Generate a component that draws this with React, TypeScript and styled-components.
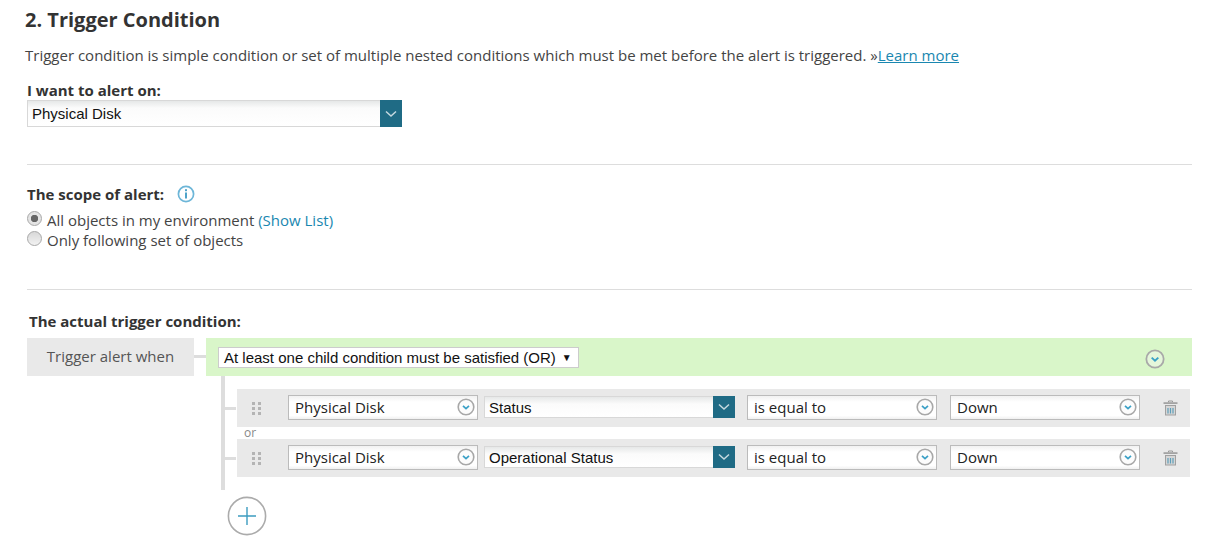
import React from "react";
import styled, { createGlobalStyle } from "styled-components";

const Global = createGlobalStyle`
  html, body { margin: 0; padding: 0; background: #fff; }
  body { font-family: "Open Sans", "Liberation Sans", sans-serif; color: #3c3c3c; overflow: hidden; }
`;

const Page = styled.div`
  width: 1206px;
  height: 559px;
  box-sizing: border-box;
  padding: 8px 14px 0 25px;
`;
const Title = styled.h2`
  margin: 0;
  font-size: 20px;
  line-height: 24px;
  font-weight: 700;
  color: #333;
`;
const Description = styled.p`
  margin: 11px 0 0;
  font-size: 15px;
  line-height: 24px;
  color: #444;
`;
const Link = styled.a<{ $under?: boolean }>`
  color: #1a87b0;
  text-decoration: ${(p) => (p.$under ? "underline" : "none")};
`;
const Section = styled.section<{ $pad?: number; $top?: number }>`
  padding-left: ${(p) => p.$pad ?? 2}px;
  margin-top: ${(p) => p.$top ?? 0}px;
`;
const Label = styled.div`
  font-size: 15px;
  line-height: 18px;
  font-weight: 700;
  color: #333;
`;
const Rule = styled.hr<{ $top: number }>`
  border: 0;
  height: 1px;
  background: #ddd;
  margin: ${(p) => p.$top}px 0 0 2px;
`;
const MainSelect = styled.div`
  display: flex;
  width: 375px;
  height: 27px;
  box-sizing: border-box;
  margin-top: 1px;
`;
const NativeField = styled.div`
  flex: 1;
  box-sizing: border-box;
  display: flex;
  align-items: center;
  padding-left: 4px;
  font-family: "Liberation Sans", Arial, sans-serif;
  font-size: 15px;
  color: #111;
  background: linear-gradient(#e6e8e8 0, #fbfbfb 7px, #fff 100%);
  border: 1px solid #d8d8d8;
  border-right: 0;
`;
const ArrowBox = styled.div`
  width: 22px;
  background: #1f6b85;
  display: flex;
  align-items: center;
  justify-content: center;
`;
const ScopeTitle = styled.div`
  display: flex;
  align-items: center;
  gap: 13px;
`;
const RadioList = styled.div`
  margin-top: 7px;
`;
const RadioRow = styled.div`
  display: flex;
  align-items: center;
  height: 20px;
  font-size: 15px;
  color: #444;
`;
const Radio = styled.span<{ $on?: boolean }>`
  width: 15px;
  height: 15px;
  margin: -4px 5px 0 0;
  border-radius: 50%;
  box-sizing: border-box;
  border: 1px solid #a8a8a8;
  background: ${(p) =>
    p.$on
      ? "radial-gradient(circle, #666 0 3.4px, #e4e4e4 4px)"
      : "linear-gradient(#d8d8d8, #f2f2f2)"};
`;
const Builder = styled.div`
  display: flex;
  margin: 8px 0 0 2px;
`;
const WhenBox = styled.div`
  width: 167px;
  height: 38px;
  box-sizing: border-box;
  padding-bottom: 2px;
  background: #e9e9e9;
  display: flex;
  align-items: center;
  justify-content: center;
  font-size: 15px;
  color: #555;
`;
const Stub = styled.div`
  width: 12px;
  height: 3px;
  margin-top: 17px;
  background: #ddd;
`;
const Tree = styled.div`
  flex: 1;
`;
const GroupHead = styled.div`
  height: 38px;
  background: #d9f6c9;
  display: flex;
  align-items: center;
  justify-content: space-between;
  padding: 0 27px 0 12px;
`;
const GroupToggle = styled.span`
  display: flex;
  margin-top: 3px;
`;
const GroupSelect = styled.div`
  width: 361px;
  height: 21px;
  box-sizing: border-box;
  background: #fff;
  border: 1px solid #ccc;
  padding-left: 5px;
  display: flex;
  align-items: center;
  font-family: "Liberation Sans", Arial, sans-serif;
  font-size: 15px;
  color: #111;
`;
const Caret = styled.span`
  font-size: 10px;
  margin-left: 6px;
`;
const Branch = styled.div`
  margin-left: 15px;
  border-left: 4px solid #ddd;
  padding: 13px 2px 13px 12px;
`;
const Row = styled.div`
  height: 38px;
  background: #e9e9e9;
  display: flex;
  align-items: center;
  position: relative;
  &::before {
    content: "";
    position: absolute;
    left: -12px;
    top: 18px;
    width: 11px;
    height: 3px;
    background: #ddd;
  }
`;
const Grip = styled.div`
  width: 11px;
  margin: 0 25px 0 15px;
  display: grid;
  grid-template-columns: repeat(2, 3px);
  gap: 2px 3px;
  & > i { width: 3px; height: 3px; background: #b4b4b4; display: block; }
`;
const Dropdown = styled.div<{ $w: number; $gap: number }>`
  width: ${(p) => p.$w}px;
  height: 25px;
  margin: 0 ${(p) => p.$gap}px 2px 0;
  box-sizing: border-box;
  border: 1px solid #bbb;
  background: linear-gradient(#f1f1f1 0, #fff 6px, #fff 85%, #f0f0f0 100%);
  display: flex;
  align-items: center;
  justify-content: space-between;
  padding: 0 2px 0 6px;
  font-size: 15px;
  color: #222;
`;
const FieldSelect = styled.div`
  width: 251px;
  height: 22px;
  margin: 0 12px 2px 0;
  display: flex;
`;
const Or = styled.div`
  height: 12px;
  line-height: 12px;
  padding-left: 7px;
  font-size: 12px;
  color: #888;
`;
const PlusWrap = styled.div`
  margin: 6px 0 0 21px;
  height: 40px;
`;
const ChevronCircle = ({ size = 18 }: { size?: number }) => (
  <svg width={size} height={size} viewBox="0 0 18 18">
    <circle cx="9" cy="9" r="7.8" fill="#f8f8f8" fillOpacity="0.4" stroke="#a8a8a8" strokeWidth="1.6" />
    <path d="M6 7.8 L9 10.6 L12 7.8" fill="none" stroke="#3aa0c6" strokeWidth="1.7" />
  </svg>
);
const WhiteChevron = () => (
  <svg width="12" height="8" viewBox="0 0 12 8">
    <path d="M1 1.5 L6 6 L11 1.5" fill="none" stroke="#c5d9e0" strokeWidth="1.5" />
  </svg>
);
const InfoIcon = () => (
  <svg width="18" height="18" viewBox="0 0 18 18">
    <circle cx="9" cy="9" r="7.6" fill="#fff" stroke="#6db6d8" strokeWidth="1.7" />
    <rect x="8" y="4.2" width="2" height="2" fill="#4fa3c9" />
    <rect x="8" y="7.5" width="2" height="6" fill="#4fa3c9" />
  </svg>
);
const TrashIcon = () => (
  <svg width="15" height="16" viewBox="0 0 15 16">
    <path d="M5.5 2.2 V1 H9.5 V2.2" fill="none" stroke="#999" strokeWidth="1" />
    <rect x="0.5" y="2.2" width="14" height="1.8" fill="#a3a3a3" />
    <path d="M2 5 H13 V15.5 H2 Z" fill="#a0a0a0" />
    <rect x="3" y="6" width="9" height="8.5" fill="#d6d6d6" />
    <path d="M5 8 V13.5 M7.5 8 V13.5 M10 8 V13.5" stroke="#5f9fb9" strokeWidth="1.2" />
  </svg>
);
const PlusIcon = () => (
  <svg width="40" height="40" viewBox="0 0 40 40">
    <circle cx="20" cy="20" r="18.6" fill="#fff" stroke="#ababab" strokeWidth="1.6" />
    <path d="M20 11 V29 M11 20 H29" stroke="#3c9cc0" strokeWidth="1.4" />
  </svg>
);

const ConditionRow = ({ field }: { field: string }) => (
  <Row>
    <Grip>{Array.from({ length: 6 }, (_, i) => <i key={i} />)}</Grip>
    <Dropdown $w={190} $gap={6}>Physical Disk<ChevronCircle /></Dropdown>
    <FieldSelect>
      <NativeField>{field}</NativeField>
      <ArrowBox><WhiteChevron /></ArrowBox>
    </FieldSelect>
    <Dropdown $w={190} $gap={13}>is equal to<ChevronCircle /></Dropdown>
    <Dropdown $w={190} $gap={23}>Down<ChevronCircle /></Dropdown>
    <TrashIcon />
  </Row>
);

export default function App() {
  return (
    <Page>
      <Global />
      <Title>2. Trigger Condition</Title>
      <Description>
        Trigger condition is simple condition or set of multiple nested conditions which must be met before the alert is triggered. »<Link $under href="#">Learn more</Link>
      </Description>
      <Section $top={14}>
        <Label>I want to alert on:</Label>
        <MainSelect>
          <NativeField>Physical Disk</NativeField>
          <ArrowBox><WhiteChevron /></ArrowBox>
        </MainSelect>
      </Section>
      <Rule $top={37} />
      <Section $top={20}>
        <ScopeTitle>
          <Label>The scope of alert:</Label>
          <InfoIcon />
        </ScopeTitle>
        <RadioList>
          <RadioRow>
            <Radio $on />All objects in my environment&nbsp;<Link href="#">(Show List)</Link>
          </RadioRow>
          <RadioRow>
            <Radio />Only following set of objects
          </RadioRow>
        </RadioList>
      </Section>
      <Rule $top={39} />
      <Section $top={22} $pad={4}>
        <Label>The actual trigger condition:</Label>
      </Section>
      <Builder>
        <WhenBox>Trigger alert when</WhenBox>
        <Stub />
        <Tree>
          <GroupHead>
            <GroupSelect>At least one child condition must be satisfied (OR)<Caret>▼</Caret></GroupSelect>
            <GroupToggle><ChevronCircle size={20} /></GroupToggle>
          </GroupHead>
          <Branch>
            <ConditionRow field="Status" />
            <Or>or</Or>
            <ConditionRow field="Operational Status" />
          </Branch>
          <PlusWrap><PlusIcon /></PlusWrap>
        </Tree>
      </Builder>
    </Page>
  );
}
